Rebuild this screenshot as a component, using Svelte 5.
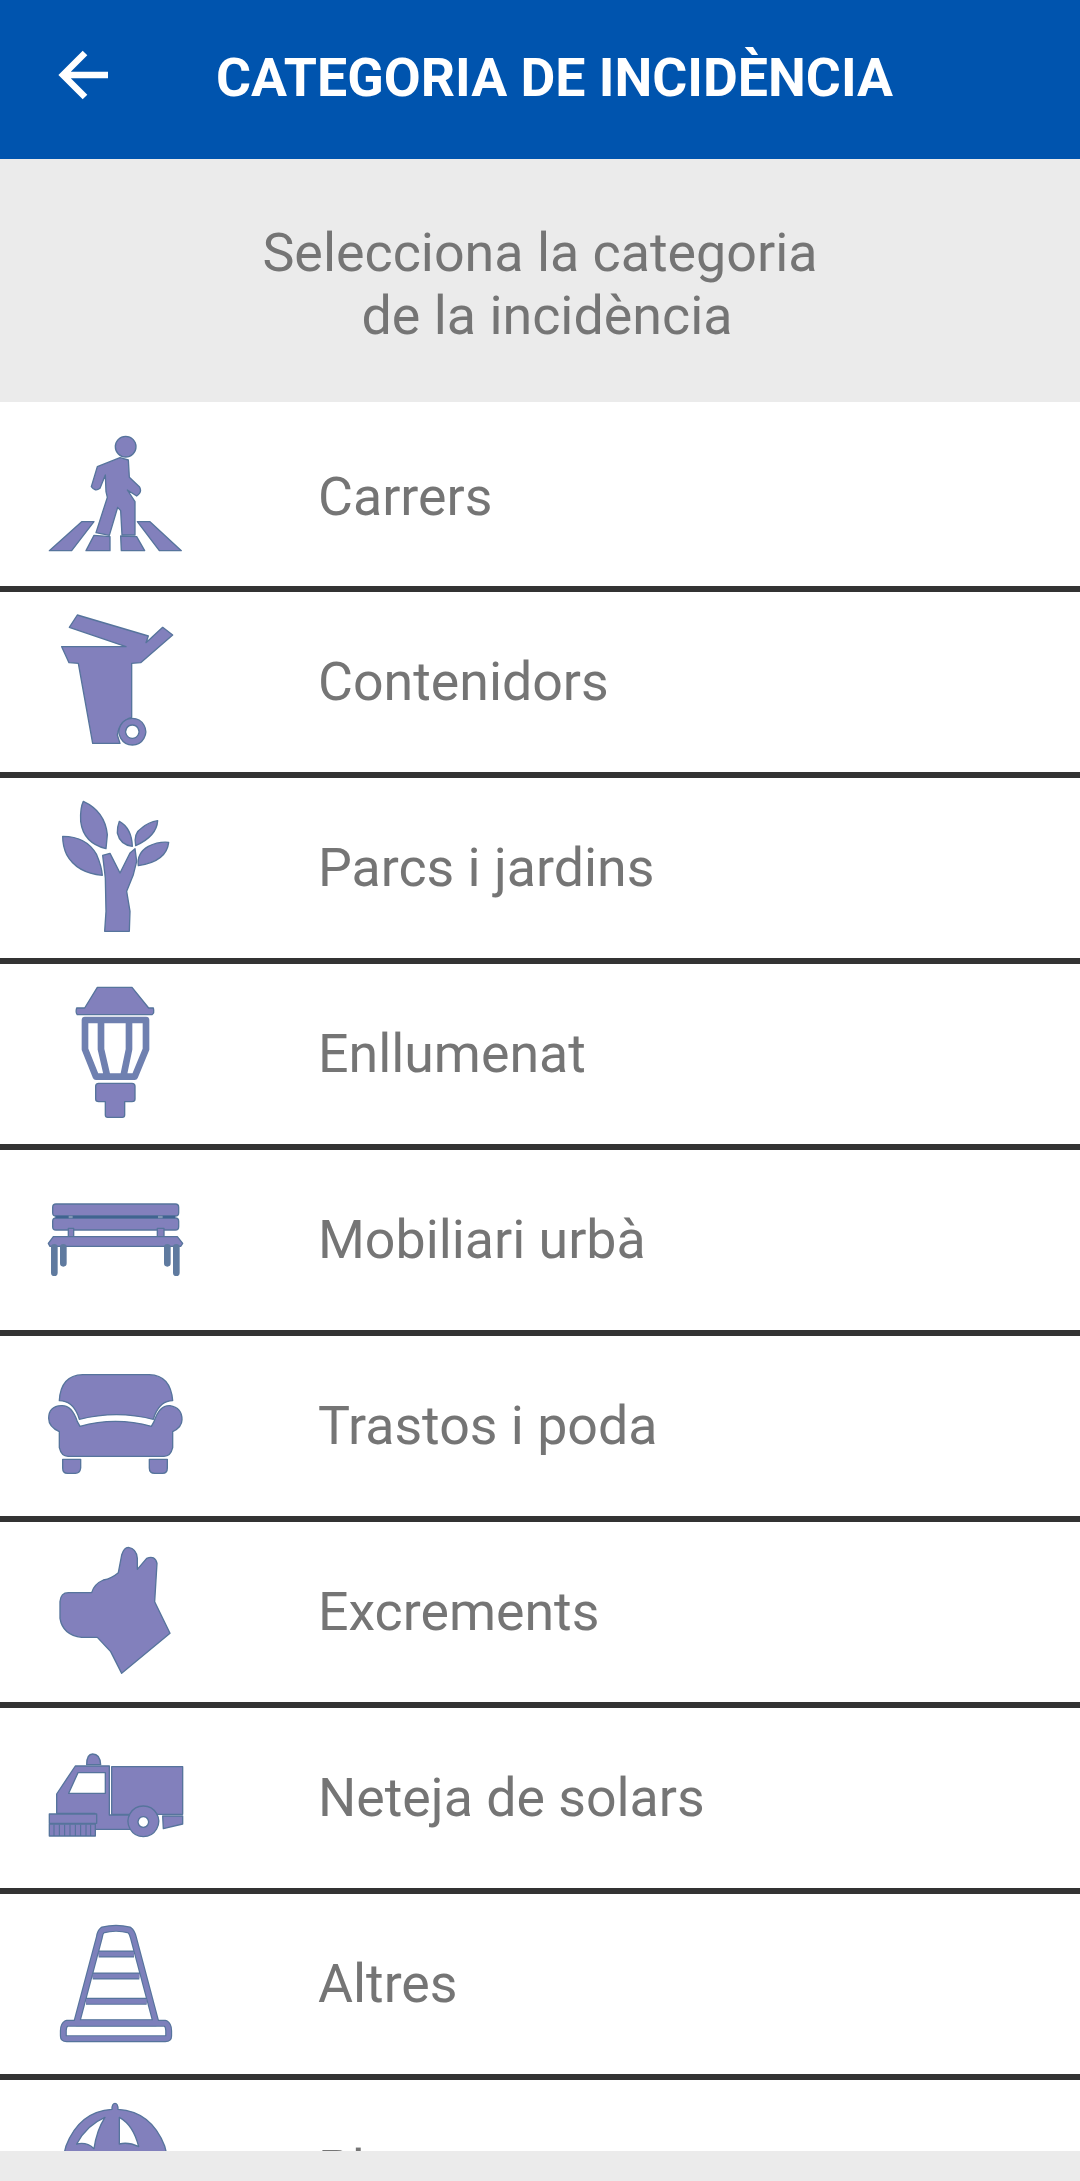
<script>
  const rows = [
    { label: 'Carrers', vb: '0 -54 600 552', first: true, id: 'walk' },
    { label: 'Contenidors', vb: '0 516 600 540', id: 'bin' },
    { label: 'Parcs i jardins', vb: '0 0 600 540', id: 'tree' },
    { label: 'Enllumenat', vb: '0 12 600 540', id: 'lamp' },
    { label: 'Mobiliari urbà', vb: '0 570 600 540', id: 'bench' },
    { label: 'Trastos i poda', vb: '0 138 600 540', id: 'sofa' },
    { label: 'Excrements', vb: '0 696 600 540', id: 'dog' },
    { label: 'Neteja de solars', vb: '0 24 600 540', id: 'truck' },
    { label: 'Altres', vb: '0 582 600 540', id: 'cone' },
    { label: 'Plagues', vb: '0 1140 600 540', id: 'umbrella' }
  ];
  const conePaths = [
    'M248 690Q288 680 328 690 336 696 340 712L408 968H170L238 712Q240 696 248 690ZM236 762H342M218 828H358M198 904H380',
    'M140 970H436Q446 976 446 992V1008Q446 1016 436 1016H140Q130 1016 130 1008V992Q130 976 140 970Z'
  ];
</script>

<div class="page">
  <header class="bar">
    <svg class="back" viewBox="0 0 60 60" width="60" height="60" aria-hidden="true">
      <path d="M54 30H9M31 8 9 30l22 22" />
    </svg>
    <h1>CATEGORIA DE INCIDÈNCIA</h1>
  </header>
  <div class="intro">
    <span>Selecciona la categoria</span>
    <span class="second">de la incidència</span>
  </div>
  <div class="list">
    {#each rows as r}
      <div class="row" class:first={r.first}>
        <svg class="ic" viewBox={r.vb} aria-hidden="true">
          {#if r.id === 'walk'}
            <circle cx="317" cy="80" r="31" />
            <path d="M300 113 325 120 328 172 358 200Q368 216 350 228L322 210 345 245V345H306L302 272 293 262 268 346 228 338 262 232 258 215 256 165 240 205Q225 216 214 200L232 140Z" />
            <path d="M185 305H222L155 392H88ZM222 346 270 350V392H198ZM302 348 350 350 374 392H304ZM352 305H390L484 392H418Z" />
          {:else if r.id === 'bin'}
            <path d="M172 585 385 648 378 668 428 622 458 645 362 728 335 730V892Q298 902 292 945L300 970H218L175 730 147 728 125 680H318L148 622Z" />
            <path fill-rule="evenodd" d="M337 895a40 40 0 1 0 .1 0ZM337 915a20 20 0 1 1-.1 0Z" />
          {:else if r.id === 'tree'}
            <path d="M190 70Q255 100 262 170L258 212Q190 195 182 130 180 90 190 70Z" />
            <path d="M128 175Q200 175 230 230 245 265 247 292 170 285 140 230 128 205 128 175Z" />
            <path d="M298 130Q335 150 337 205 300 200 292 165 292 145 298 130Z" />
            <path d="M413 128Q410 175 347 203 340 165 365 150 385 133 413 128Z" />
            <path d="M446 193Q440 250 355 263 350 225 385 205 415 190 446 193Z" />
            <path d="M248 232 270 226 300 285 330 225 345 212 350 250 340 290 320 340 330 400 328 460H254L258 400 256 300Z" />
          {:else if r.id === 'lamp'}
            <path d="M232 82h104l50 62h14q4 16-4 20H172q-6-6-2-20h24Z" />
            <path class="thick" d="M195 180H378V268L344 350H228L195 268ZM243 185V268L262 350M327 185V268L310 350" />
            <path d="M236 370H336q9 0 9 9v38q0 8-9 8H314v40q0 7-7 7h-44q-7 0-7-7V425H236q-9 0-9-8V379q0-9 9-9Z" />
          {:else if r.id === 'bench'}
            <rect x="98" y="732" width="378" height="36" rx="10" />
            <rect x="98" y="774" width="378" height="36" rx="10" />
            <path class="dark" d="M106 771H146M158 771H414M428 771H466" />
            <path d="M145 805h16v26h-16ZM412 805h20v26h-20Z" />
            <path d="M100 830H472l16 20-6 9H90l-5-9Z" />
            <path class="thin" d="M103 862V938M130 862V910M442 862V910M469 862V938" />
          {:else if r.id === 'sofa'}
            <path d="M118 332q4-76 70-78h200q64 2 70 78-36 0-54 44l-4 12q-110-28-222 0l-4-12q-18-44-56-44Z" />
            <path d="M124 347q32-2 48 48l8 14q106-30 214 0l8-14q16-50 48-48 36 6 36 42 0 22-28 36v48q-6 26-26 26H144q-20 0-26-26v-48q-32-14-32-40 0-36 38-38Z" />
            <path d="M128 508h54v26q-2 16-16 16h-24q-14 0-14-16ZM388 508h54v26q0 16-14 16h-24q-16 0-16-16Z" />
          {:else if r.id === 'dog'}
            <path d="M325 772Q350 776 352 805L352 838 380 805Q405 795 411 820L404 935 450 1030 305 1150 272 1085 232 1042H185Q128 1035 120 985V935Q122 908 145 908H215Q222 882 250 870 275 865 295 848L305 795Q312 772 325 772Z" />
          {:else if r.id === 'truck'}
            <path d="M200 194q0-32 18-32 22 0 24 32Z" />
            <path fill-rule="evenodd" d="M166 198H268V345H332V388H225V340H110V282ZM174 218 146 280H256V218Z" />
            <path d="M275 200H488V343H275Z" />
            <path fill-rule="evenodd" d="M370 318a46 46 0 1 0 .1 0ZM370 350a16 16 0 1 1-.1 0Z" />
            <path d="M428 348H488V372L430 386Z" />
            <path d="M88 342H230V370H88ZM88 372H226V408H88Z" />
            <path class="slots" d="M102 374V408M118 374V408M134 374V408M150 374V408M166 374V408M182 374V408M198 374V408M212 374V408" />
          {:else if r.id === 'cone'}
            {#each conePaths as d}
              <path class="under" {d} />
            {/each}
            {#each conePaths as d}
              <path class="over" {d} />
            {/each}
          {:else if r.id === 'umbrella'}
            <path d="M276 1228q0-18 9-18t9 18q100 6 140 110l6 24H132l6-24q40-104 138-110Z" />
            <path class="hole" d="M170 1332Q200 1275 255 1252 230 1290 222 1346 200 1325 170 1332ZM298 1252Q340 1275 356 1340 325 1325 298 1332Z" />
          {/if}
        </svg>
        <span class="label">{r.label}</span>
      </div>
    {/each}
  </div>
  <div class="foot"></div>
</div>

<style>
  :global(body) { margin: 0; }
  .page {
    width: 1080px;
    height: 2181px;
    display: flex;
    flex-direction: column;
    font-family: Roboto, "Liberation Sans", sans-serif;
    background: #fff;
    overflow: hidden;
  }
  .bar {
    height: 159px;
    flex: none;
    background: #0054ae;
    display: flex;
    align-items: center;
    padding: 0 0 4px 54px;
    box-sizing: border-box;
    color: #fff;
  }
  .back { flex: none; margin-bottom: 5px; }
  .back path { fill: none; stroke: #fff; stroke-width: 6.5; }
  h1 {
    margin: 0 0 0 102px;
    font-size: 53.6px;
    font-weight: 700;
    line-height: 60px;
    white-space: nowrap;
  }
  .intro {
    height: 243px;
    flex: none;
    box-sizing: border-box;
    background: #ebebeb;
    color: #757575;
    font-size: 53.8px;
    line-height: 63px;
    text-align: center;
    display: flex;
    flex-direction: column;
    justify-content: center;
    padding-top: 6px;
  }
  .second { padding-left: 14px; }
  .list {
    flex: 1;
    min-height: 0;
    overflow: hidden;
  }
  .row {
    height: 180px;
    display: flex;
    align-items: center;
    border-bottom: 6px solid #333;
    background: #fff;
  }
  .row.first { height: 184px; }
  .row.first .label { padding-top: 5px; }
  .ic {
    flex: none;
    width: 200px;
    height: 100%;
    margin-left: 20px;
    overflow: hidden;
  }
  .ic :global(*) { fill: #8280bc; stroke: #56749c; stroke-width: 4; stroke-linejoin: round; }
  .ic .thick { fill: none; stroke: #6f80b0; stroke-width: 20; }
  .ic .thin { fill: none; stroke: #5f7a9f; stroke-width: 20; stroke-linecap: round; }
  .ic .dark { fill: none; stroke: #3f6490; stroke-width: 7; }
  .ic .slots { fill: none; stroke: #4f6f98; stroke-width: 3; }
  .ic .hole { fill: #fff; stroke-width: 4; }
  .ic .under { fill: none; stroke: #56749c; stroke-width: 21; }
  .ic .over { fill: none; stroke: #7d80bb; stroke-width: 14; }
  .label {
    margin-left: 98px;
    font-size: 53.7px;
    color: #757575;
    line-height: 60px;
  }
  .foot {
    height: 30px;
    flex: none;
    background: #ebebeb;
  }
</style>
